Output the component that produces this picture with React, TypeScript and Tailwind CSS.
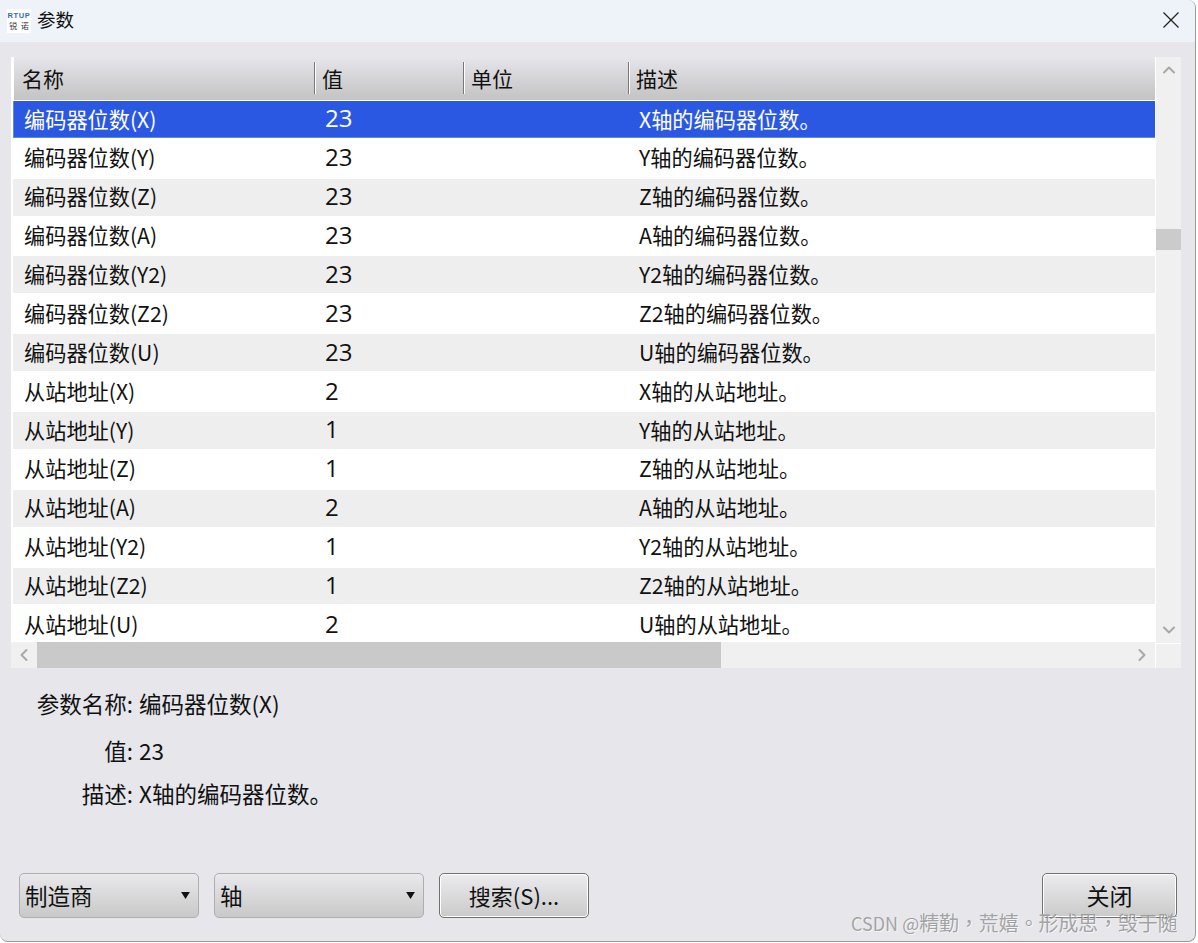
import { ChevronUp, ChevronDown, ChevronLeft, ChevronRight } from "lucide-react";

const axes = ["X", "Y", "Z", "A", "Y2", "Z2", "U"];

const rows = [
  ...axes.map((a) => ({ name: `编码器位数(${a})`, value: "23", desc: `${a}轴的编码器位数。` })),
  ...axes.map((a) => ({
    name: `从站地址(${a})`,
    value: a === "X" || a === "A" || a === "U" ? "2" : "1",
    desc: `${a}轴的从站地址。`,
  })),
];

function HeaderCell({ label, width }: { label: string; width: string }) {
  return (
    <div className={`${width} relative flex h-full items-center pl-[8px] text-[21px] text-[#111]`}>
      <span className="absolute left-0 top-[5px] h-[32px] w-[2px] border-l border-[#777] bg-white" />
      {label}
    </div>
  );
}

function Combo({ label, width }: { label: string; width: string }) {
  return (
    <div className={`${width} flex h-[45px] items-center justify-between rounded-[5px] border border-[#aeaeae] bg-gradient-to-b from-[#e9e9ec] to-[#c9c9c9] pl-[5px] pr-[8px] text-[22.5px] text-[#111]`}>
      <span>{label}</span>
      <svg width="9" height="7" viewBox="0 0 10 8" className="mb-[1px]"><path d="M0 0h10L5 8z" fill="#111" /></svg>
    </div>
  );
}

export default function App() {
  return (
    <div className="h-[943px] w-[1198px] overflow-hidden bg-white font-['Noto_Sans_CJK_SC','Liberation_Sans',sans-serif]">
      <div className="flex h-[942px] w-[1196px] flex-col overflow-hidden rounded-tr-lg rounded-b-lg border-b border-r border-[#9a9a9a] bg-[#e6e6eb]">
        {/* title bar */}
        <div className="flex h-[42px] shrink-0 items-center bg-[#eef3f9] pl-[7px] pr-[16px]">
          <div className="flex h-[24px] w-[24px] flex-col items-center justify-center bg-white leading-none">
            <span className="font-['Liberation_Sans',sans-serif] text-[7.5px] font-bold tracking-[0.6px] text-[#2b6cc4]">RTUP</span>
            <span className="mt-[3px] text-[8px] text-[#333]">锐&nbsp;&nbsp;诺</span>
          </div>
          <span className="mb-[2px] ml-[6px] text-[18.5px] text-[#111]">参数</span>
          <svg width="16" height="16" viewBox="0 0 16 16" className="mb-[3px] ml-auto" fill="none" stroke="#222" strokeWidth="1.3">
            <path d="M0.5 0.5 15.5 15.5M15.5 0.5 0.5 15.5" />
          </svg>
        </div>

        <div className="flex min-h-0 flex-1 flex-col pl-[11px] pr-[15px] pt-[15px]">
          {/* table */}
          <div className="flex h-[611px] w-[1170px] shrink-0">
            <div className="flex w-[1144px] flex-col bg-white">
              <div className="ml-[3px] flex h-[43px] shrink-0 bg-gradient-to-b from-[#e6e6eb] to-[#c3c3c3]">
                <div className="flex h-full w-[300px] items-center pl-[8px] text-[21px] text-[#111]">名称</div>
                <HeaderCell label="值" width="w-[149px]" />
                <HeaderCell label="单位" width="w-[165px]" />
                <HeaderCell label="描述" width="flex-1" />
              </div>
              <div className="mt-[1px] min-h-0 flex-1 overflow-hidden">
                {rows.map((r, i) => (
                  <div
                    key={r.name}
                    className={`ml-[2px] flex items-center pb-[2px] text-[21.2px] ${
                      i === 0
                        ? "h-[36.8px] bg-[#2b58e3] text-white shadow-[inset_1px_-1px_0_#5f86ec]"
                        : i % 2 === 0
                          ? "h-[36.9px] bg-[#eeeeee] text-[#111]"
                          : "h-[40.9px] bg-white text-[#111]"
                    }`}
                  >
                    <div className="w-[312px] pl-[11px]">{r.name}</div>
                    <div className="w-[314px] font-['Open_Sans',sans-serif] text-[24px]">{r.value}</div>
                    <div>{r.desc}</div>
                  </div>
                ))}
              </div>
              {/* horizontal scrollbar */}
              <div className="flex h-[26px] shrink-0 bg-[#f0f0f0]">
                <div className="flex w-[26px] items-center justify-center text-[#a8a8a8]">
                  <ChevronLeft size={20} strokeWidth={2.4} />
                </div>
                <div className="w-[684px] bg-[#c9c9c9]" />
                <div className="ml-auto flex w-[26px] items-center justify-center text-[#a8a8a8]">
                  <ChevronRight size={20} strokeWidth={2.4} />
                </div>
              </div>
            </div>
            {/* vertical scrollbar */}
            <div className="flex w-[26px] flex-col border-l border-white bg-[#f0f0f0]">
              <div className="flex h-[25px] items-center justify-center text-[#a8a8a8]">
                <ChevronUp size={20} strokeWidth={2.4} />
              </div>
              <div className="mt-[147px] h-[21px] bg-[#cbcbcb]" />
              <div className="mt-auto flex h-[25px] items-center justify-center text-[#a8a8a8]">
                <ChevronDown size={20} strokeWidth={2.4} />
              </div>
              <div className="mt-[1px] h-[25px] border-t border-white" />
            </div>
          </div>

          {/* selected parameter details */}
          <div className="mt-[19px] grid grid-cols-[122px_1fr] gap-x-[6px] text-[22.5px] leading-[32px] text-[#111]">
            <div className="text-right">参数名称:</div>
            <div>编码器位数(X)</div>
            <div className="mt-[15px] text-right">值:</div>
            <div className="mt-[15px]">23</div>
            <div className="mt-[11px] text-right">描述:</div>
            <div className="mt-[11px]">X轴的编码器位数。</div>
          </div>

          {/* footer */}
          <div className="mb-[23px] ml-[8px] mt-auto flex items-center gap-[15px]">
            <Combo label="制造商" width="w-[180px]" />
            <Combo label="轴" width="w-[210px]" />
            <button className="h-[45px] w-[150px] rounded-[5px] border border-[#707070] bg-gradient-to-b from-[#ececef] to-[#cacaca] text-[22px] text-[#111] shadow-[inset_0_0_0_1px_#fff]">
              搜索(S)...
            </button>
            <button className="ml-auto mr-[3px] h-[45px] w-[135px] rounded-[5px] border border-[#707070] bg-gradient-to-b from-[#ececef] to-[#cacaca] text-[23px] text-[#111] shadow-[inset_0_0_0_1px_#fff]">
              关闭
            </button>
          </div>
        </div>
      </div>
      {/* CSDN watermark over the dialog */}
      <div className="absolute left-[851px] top-[910px] font-['Noto_Sans_CJK_TC',sans-serif] text-[19.9px] leading-[26px] text-[#8f8f8f]/80 [text-shadow:1px_1px_0_rgba(255,255,255,0.6)]">
        <span className="text-[18px]">CSDN @</span>精勤，荒嬉。形成思，毁于随
      </div>
    </div>
  );
}
